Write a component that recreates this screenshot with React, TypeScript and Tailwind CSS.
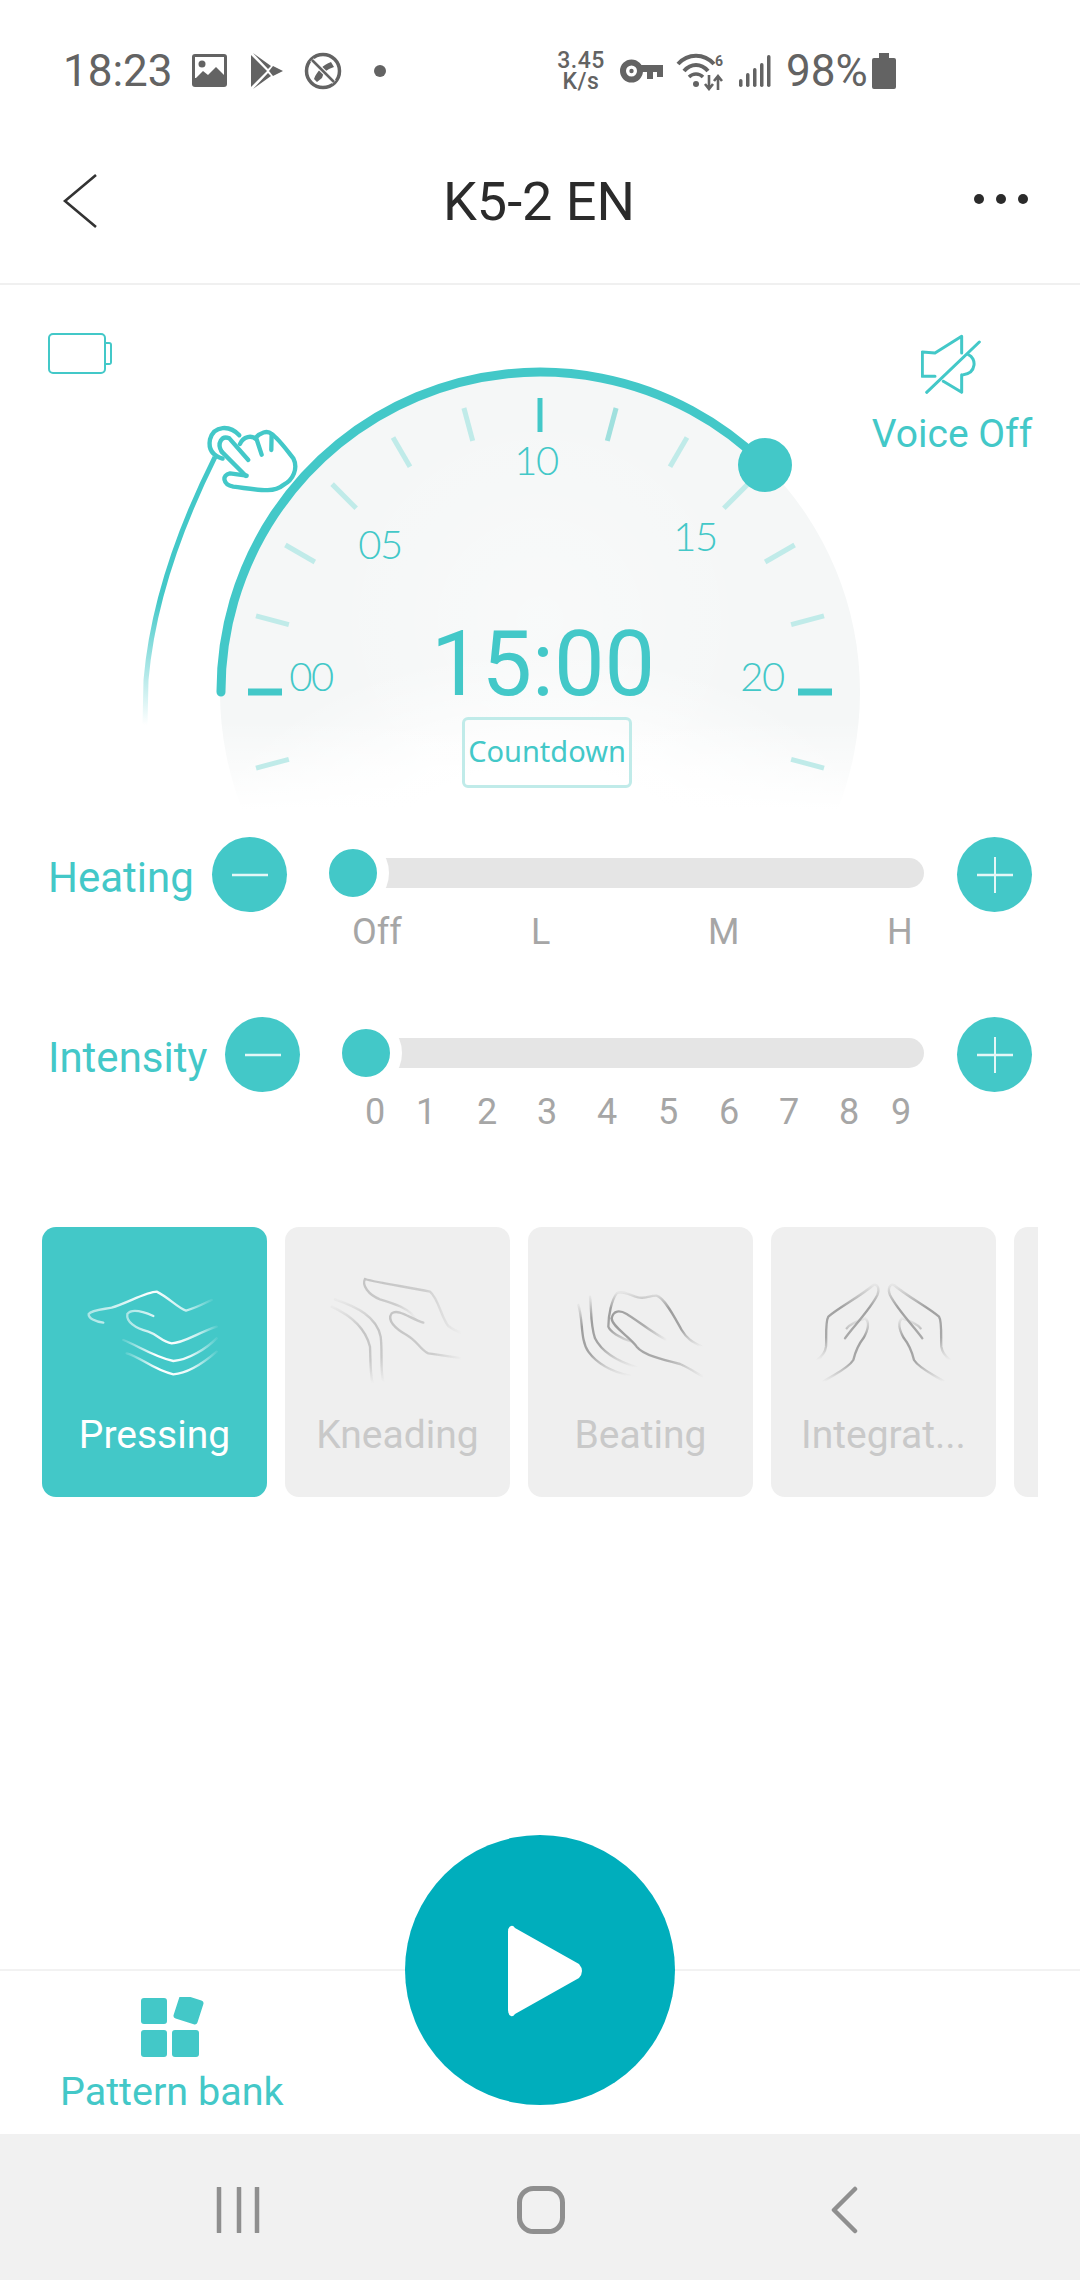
import React from "react";

const TEAL = "#43c8c8";

function StatusBar() {
  return (
    <div className="h-[120px] pt-[51px] flex text-[#636363] font-['Roboto',sans-serif]">
      <div className="h-[40px] flex items-center pl-[63px]">
        <span className="text-[44px] leading-[40px] w-[129px] whitespace-nowrap">18:23</span>
        <svg width="35" height="35" viewBox="0 0 35 35" className="shrink-0">
          <rect width="35" height="33" y="0" rx="3" fill="#636363" />
          <rect x="3" y="3" width="29" height="21" fill="#fff" />
          <circle cx="10" cy="10" r="3.5" fill="#636363" />
          <path d="M3 25 L11 17 L16 21 L24 13 L32 21 V27 H3Z" fill="#636363" />
        </svg>
        <svg width="32" height="36" viewBox="0 0 32 36" className="ml-[24px] shrink-0">
          <path d="M0 2 L16 18 L0 34Z" fill="#636363" />
          <path d="M2 0 L20 13 L17 16Z M2 36 L20 23 L17 20Z" fill="#636363" />
          <path d="M22 13 L32 18 L22 23 L18 18Z" fill="#636363" />
        </svg>
        <svg width="38" height="38" viewBox="0 0 38 38" className="ml-[21px] shrink-0">
          <circle cx="19" cy="19" r="16.5" fill="none" stroke="#636363" strokeWidth="3.5" />
          <path d="M10 27 C13 19 19 13 27 10 L30 15 L25 17 C21 19 19 22 18 26 L13 30Z" fill="#636363" />
          <path d="M8 8 L30 30" stroke="#fff" strokeWidth="5" />
          <path d="M8 8 L30 30" stroke="#636363" strokeWidth="2.5" />
        </svg>
        <span className="ml-[32px] size-[12px] rounded-full bg-[#636363]" />
      </div>
      <div className="h-[40px] flex items-center ml-[170px]">
        <div className="flex flex-col items-center w-[50px] text-[23px] leading-[21px] font-medium tracking-[0.5px]">
          <span>3.45</span>
          <span>K/s</span>
        </div>
        <svg width="44" height="24" viewBox="0 0 44 24" className="ml-[14px] shrink-0">
          <circle cx="11.5" cy="12" r="8.5" fill="none" stroke="#636363" strokeWidth="6" />
          <circle cx="11.5" cy="12" r="2.2" fill="#636363" />
          <path d="M19 6 H43 V18 H37 V13 H33 V20 H27 V13 H19Z" fill="#636363" />
        </svg>
        <svg width="50" height="40" viewBox="0 0 50 40" className="ml-[12px] shrink-0">
          <path d="M2 13 C12 2 28 2 38 13" fill="none" stroke="#636363" strokeWidth="4" />
          <path d="M8 20 C15 12 25 12 32 20" fill="none" stroke="#636363" strokeWidth="4" />
          <path d="M13 26 C17 22 23 22 27 26" fill="none" stroke="#636363" strokeWidth="3.5" />
          <circle cx="20" cy="33" r="3" fill="#636363" />
          <path d="M33 24 V37 M29 33 L33 38 L37 33" fill="none" stroke="#636363" strokeWidth="2.6" />
          <path d="M42 39 V26 M38 30 L42 25 L46 30" fill="none" stroke="#636363" strokeWidth="2.6" />
          <text x="39" y="15" fontSize="14" fontWeight="700" fill="#636363" fontFamily="Roboto">6</text>
        </svg>
        <svg width="32" height="32" viewBox="0 0 32 32" className="ml-[13px] shrink-0">
          <rect x="0" y="24" width="3.5" height="8" rx="1.7" fill="#636363" />
          <rect x="7" y="18" width="3.5" height="14" rx="1.7" fill="#636363" />
          <rect x="14" y="13" width="3.5" height="19" rx="1.7" fill="#636363" />
          <rect x="21" y="8" width="3.5" height="24" rx="1.7" fill="#636363" />
          <rect x="28" y="0" width="3.5" height="32" rx="1.7" fill="#636363" />
        </svg>
        <span className="ml-[15px] text-[44px] leading-[40px] w-[86px] whitespace-nowrap">98%</span>
        <svg width="24" height="36" viewBox="0 0 24 36" className="shrink-0">
          <path d="M7 0 H17 V5 H22 Q24 5 24 7 V34 Q24 36 22 36 H2 Q0 36 0 34 V7 Q0 5 2 5 H7Z" fill="#636363" />
        </svg>
      </div>
    </div>
  );
}

function NavBar() {
  return (
    <div className="h-[165px] border-b-2 border-[#f0f0f0] flex items-center justify-between pl-[62px] pr-[52px] relative font-['Roboto',sans-serif]">
      <svg width="36" height="56" viewBox="0 0 36 56" className="mt-[-1px]">
        <path d="M34 2 L3 28 L34 54" fill="none" stroke="#333" strokeWidth="2.6" />
      </svg>
      <span className="text-[54px] leading-[60px] text-[#2b2b2b] ml-[6px]">K5-2 EN</span>
      <div className="flex gap-[12px] mt-[-6px]">
        <span className="size-[10px] rounded-full bg-[#2b2b2b]" />
        <span className="size-[10px] rounded-full bg-[#2b2b2b]" />
        <span className="size-[10px] rounded-full bg-[#2b2b2b]" />
      </div>
    </div>
  );
}

function Tick({ deg }: { deg: number }) {
  const major = deg === 0 || deg === 180;
  const center = deg === 90;
  const rad = (deg * Math.PI) / 180;
  const r1 = major ? 258 : 260;
  const r2 = major ? 292 : 294;
  const c = Math.cos(rad);
  const s = Math.sin(rad);
  const color = major || center ? TEAL : deg === 75 ? "#a0e0de" : "#c0ebe9";
  return (
    <line
      x1={540 + r1 * c}
      y1={692 - r1 * s}
      x2={540 + r2 * c}
      y2={692 - r2 * s}
      stroke={color}
      strokeWidth={major ? 7 : 5}
    />
  );
}

const DIAL_NUMS: { t: string; cls: string }[] = [
  { t: "00", cls: "left-[287px] top-[367px]" },
  { t: "05", cls: "left-[356px] top-[235px]" },
  { t: "10", cls: "left-[512px] top-[151px]" },
  { t: "15", cls: "left-[671px] top-[227px]" },
  { t: "20", cls: "left-[738px] top-[367px]" },
];

function Dial() {
  const ticks = [-15, 0, 15, 30, 45, 60, 75, 90, 105, 120, 135, 150, 165, 180, 195];
  return (
    <div className="relative h-[545px] font-['Roboto',sans-serif]">
      <svg width="1080" height="545" viewBox="0 285 1080 545" className="absolute inset-0">
        <defs>
          <radialGradient id="whiteCore" gradientUnits="userSpaceOnUse" cx="540" cy="860" r="340" gradientTransform="translate(540 860) scale(1 0.62) translate(-540 -860)">
            <stop offset="0.45" stopColor="#fff" stopOpacity="1" />
            <stop offset="1" stopColor="#fff" stopOpacity="0" />
          </radialGradient>
          <radialGradient id="innerGlow" gradientUnits="userSpaceOnUse" cx="540" cy="620" r="220">
            <stop offset="0" stopColor="#fff" stopOpacity="0.35" />
            <stop offset="1" stopColor="#fff" stopOpacity="0" />
          </radialGradient>
          <linearGradient id="bottomFade" x1="0" y1="720" x2="0" y2="810" gradientUnits="userSpaceOnUse">
            <stop offset="0" stopColor="#fff" stopOpacity="0" />
            <stop offset="1" stopColor="#fff" stopOpacity="1" />
          </linearGradient>
          <linearGradient id="sideLine" x1="0" y1="600" x2="0" y2="725" gradientUnits="userSpaceOnUse">
            <stop offset="0" stopColor={TEAL} stopOpacity="1" />
            <stop offset="1" stopColor={TEAL} stopOpacity="0" />
          </linearGradient>
        </defs>
        <circle cx="540" cy="692" r="320" fill="#f5f7f7" />
        <rect x="300" y="400" width="480" height="440" fill="url(#innerGlow)" />
        <rect x="200" y="480" width="680" height="350" fill="url(#whiteCore)" />
        <rect x="200" y="720" width="680" height="110" fill="url(#bottomFade)" />
        {ticks.map((d) => (
          <Tick key={d} deg={d} />
        ))}
        <path d="M221 692 A319 319 0 0 1 765 465" fill="none" stroke={TEAL} strokeWidth="9" strokeLinecap="round" />
        <circle cx="765" cy="465" r="27" fill={TEAL} />
        <path d="M215 457 C176 535 152 610 146 680 L145 725" fill="none" stroke="url(#sideLine)" strokeWidth="5" />
        <g transform="translate(30 310) scale(0.3333)" fill="none" stroke={TEAL} strokeWidth="13" strokeLinecap="round" strokeLinejoin="round">
          <path d="M628 376 C600 345 552 345 540 388 C534 420 552 438 578 446" />
          <path d="M575 425 C560 400 575 375 598 385 L655 450" />
          <path d="M575 425 L648 498" />
          <path d="M630 402 C640 378 665 375 680 388 L695 434" />
          <path d="M675 385 C690 368 712 360 725 372 L724 420" />
          <path d="M725 372 C745 385 770 420 790 445 C805 475 790 510 760 525 C730 550 690 540 610 530 C578 524 575 495 600 490 L650 497" />
        </g>
      </svg>

      {DIAL_NUMS.map((n) => (
        <span key={n.t} className={`absolute ${n.cls} w-[48px] text-center text-[40px] leading-[48px] tracking-[-1.5px] font-light font-['Lato',sans-serif] text-[#43c8c8]`}>
          {n.t}
        </span>
      ))}
      <span className="absolute left-[428px] top-[325px] w-[230px] text-center text-[90px] leading-[110px] text-[#43c8c8]">15:00</span>
      <span className="absolute left-[462px] top-[432px] w-[170px] h-[71px] pb-[3px] border-[3px] border-[#c0ebe9] rounded-[6px] flex items-center justify-center text-[29px] text-[#43c8c8] font-['Noto_Sans',sans-serif]">
        Countdown
      </span>

      <div className="relative flex justify-between items-start pl-[48px] pr-[48px] pt-[48px]">
        <div className="flex items-center">
          <span className="block w-[58px] h-[41px] border-2 border-[#43c8c8] rounded-[5px]" />
          <span className="block w-[6px] h-[23px] border-2 border-l-0 border-[#43c8c8] rounded-r-[3px]" />
        </div>
        <div className="flex flex-col items-center w-[160px]">
          <svg width="60" height="62" viewBox="183 65 180 186" className="ml-[-2px]">
            <path
              d="M305 125 V75 L225 125 L187 122 V195 H225 M325 130 C350 140 350 185 310 190 M250 210 L305 243 V190 M358 92 L200 243"
              fill="none"
              stroke="#43c8c8"
              strokeWidth="9"
              strokeLinecap="round"
              strokeLinejoin="round"
            />
          </svg>
          <span className="text-[39px] leading-[48px] mt-[15px] text-[#43c8c8] whitespace-nowrap">Voice Off</span>
        </div>
      </div>
    </div>
  );
}

function RoundBtn({ plus }: { plus?: boolean }) {
  return (
    <span className="relative size-[75px] rounded-full bg-[#43c8c8] shrink-0 flex items-center justify-center">
      <svg width="38" height="38" viewBox="0 0 38 38">
        <path d="M1 19 H37" stroke="#e4f7f7" strokeWidth="2.5" />
        {plus && <path d="M19 1 V37" stroke="#e4f7f7" strokeWidth="2" />}
      </svg>
    </span>
  );
}

function SliderRow({
  label,
  labelW,
  children,
}: {
  label: string;
  labelW: string;
  children: React.ReactNode;
}) {
  return (
    <div className="flex items-start pl-[48px] pr-[48px]">
      <span className={`${labelW} h-[75px] pt-[5px] flex items-center text-[42px] text-[#43c8c8] shrink-0`}>{label}</span>
      <RoundBtn />
      <div className="flex-1 ml-[30px] mr-[33px] min-w-0">
        <div className="relative h-[72px] flex items-center">
          <div className="ml-[36px] flex-1 h-[30px] rounded-r-full bg-[#e5e5e5]" />
          <span className="absolute left-0 top-0 size-[72px] rounded-full border-[12px] border-white bg-[#43c8c8]" />
        </div>
        {children}
      </div>
      <RoundBtn plus />
    </div>
  );
}

function PressingIcon() {
  return (
    <svg width="225" height="186" viewBox="6 -39 675 558" className="block blur-[0.5px]">
      <defs>
        <linearGradient id="pFade" x1="0" x2="1" y1="0" y2="0">
          <stop offset="0" stopColor="#fff" stopOpacity="0.15" />
          <stop offset="0.35" stopColor="#fff" stopOpacity="1" />
          <stop offset="0.7" stopColor="#fff" stopOpacity="0.9" />
          <stop offset="1" stopColor="#fff" stopOpacity="0.1" />
        </linearGradient>
        <linearGradient id="pTop" x1="0" x2="1" y1="0" y2="0">
          <stop offset="0" stopColor="#fff" stopOpacity="0.55" />
          <stop offset="0.5" stopColor="#fff" stopOpacity="1" />
          <stop offset="0.8" stopColor="#fff" stopOpacity="0.7" />
          <stop offset="1" stopColor="#fff" stopOpacity="0.1" />
        </linearGradient>
      </defs>
      <g fill="none" strokeWidth="7" strokeLinecap="round">
        <path stroke="url(#pTop)" d="M515 180 C490 192 460 207 438 212 C415 205 385 172 350 155 C320 155 260 190 215 203 C190 208 155 210 146 222 C145 235 165 245 190 248" />
        <path stroke="url(#pTop)" d="M340 228 C310 215 275 205 262 222 C258 245 285 265 325 275 C355 285 365 305 395 310 C430 310 470 280 530 260" />
        <path stroke="url(#pFade)" d="M250 300 C290 315 340 350 400 363 C445 360 500 325 530 295" />
        <path stroke="url(#pFade)" d="M260 340 C300 350 340 390 400 403 C445 400 495 365 530 335" />
      </g>
    </svg>
  );
}

function GradDefs({ id, color }: { id: string; color: string }) {
  return (
    <defs>
      <linearGradient id={`${id}V`} x1="0" x2="0" y1="0" y2="1">
        <stop offset="0" stopColor={color} stopOpacity="0.1" />
        <stop offset="0.3" stopColor={color} stopOpacity="1" />
        <stop offset="0.7" stopColor={color} stopOpacity="0.9" />
        <stop offset="1" stopColor={color} stopOpacity="0" />
      </linearGradient>
      <linearGradient id={`${id}H`} x1="0" x2="1" y1="0" y2="0">
        <stop offset="0" stopColor={color} stopOpacity="1" />
        <stop offset="0.6" stopColor={color} stopOpacity="0.8" />
        <stop offset="1" stopColor={color} stopOpacity="0" />
      </linearGradient>
    </defs>
  );
}

function KneadingIcon() {
  return (
    <svg width="225" height="186" viewBox="735 -39 675 558" className="block blur-[0.5px]">
      <GradDefs id="kn" color="#c4c4c4" />
      <g fill="none" strokeWidth="7" strokeLinecap="round">
        <path stroke="url(#knH)" d="M975 117 C965 135 985 165 1020 178 C1060 190 1110 205 1130 240" />
        <path stroke="url(#knH)" d="M975 117 C1020 130 1100 140 1170 155 C1195 175 1205 235 1225 258 C1240 270 1255 275 1265 280" />
        <path stroke="url(#knH)" d="M1150 248 C1110 235 1075 205 1055 220 C1040 240 1065 265 1100 285 C1135 305 1140 330 1165 340 C1200 345 1240 350 1265 355" />
        <path stroke="url(#knV)" d="M885 178 C950 200 1010 230 1022 290 C1028 340 1020 390 1030 425" />
        <path stroke="url(#knV)" d="M875 200 C930 225 975 260 990 320 C992 360 990 400 998 430" />
      </g>
    </svg>
  );
}

function BeatingIcon() {
  return (
    <svg width="225" height="186" viewBox="-36 -39 675 558" className="block blur-[0.5px]">
      <GradDefs id="be" color="#9c9c9c" />
      <g fill="none" strokeWidth="7" strokeLinecap="round">
        <path stroke="url(#beV)" d="M485 320 C455 305 440 295 425 270 C405 235 375 175 350 167 C330 165 320 178 295 172 C270 165 245 150 230 160 C215 180 205 225 205 260 C210 275 240 295 275 305" />
        <path stroke="url(#beH)" d="M215 235 C220 210 240 210 260 222 C290 240 340 280 380 300" />
        <path stroke="url(#beH)" d="M215 235 C215 260 270 290 290 320 C310 345 370 360 420 372 C450 385 470 400 490 410" />
        <path stroke="url(#beV)" d="M150 170 C155 205 150 250 165 295 C185 335 235 365 290 382" />
        <path stroke="url(#beV)" d="M115 195 C130 240 120 300 145 335 C170 370 215 395 270 408" />
      </g>
    </svg>
  );
}

function IntegrateIcon() {
  const hand = (
    <g fill="none" strokeWidth="7" strokeLinecap="round">
      <path stroke="url(#inV)" d="M915 295 C935 265 990 210 1012 165 C1020 145 1012 130 1000 135 C960 170 900 200 865 230 C855 245 860 300 858 320 C855 340 845 350 832 360" />
      <path stroke="url(#inV)" d="M920 265 C930 250 960 240 975 235 C990 245 985 270 970 295 C950 320 945 340 940 360 C925 385 880 405 850 425" />
    </g>
  );
  return (
    <svg width="225" height="186" viewBox="693 -39 675 558" className="block blur-[0.5px]">
      <GradDefs id="in" color="#a0a0a0" />
      {hand}
      <g transform="translate(2062 0) scale(-1 1)">{hand}</g>
    </svg>
  );
}

function Card({ label, active, icon }: { label: string; active?: boolean; icon?: React.ReactNode }) {
  return (
    <div className={`w-[225px] h-[270px] shrink-0 rounded-[14px] ${active ? "bg-[#43c8c8]" : "bg-[#efefef]"}`}>
      {icon}
      <div className={`text-center text-[39px] leading-[44px] whitespace-nowrap ${active ? "text-white" : "text-[#c9c9c9]"}`}>{label}</div>
    </div>
  );
}

export default function App() {
  return (
    <div className="w-[1080px] h-[2280px] bg-white flex flex-col overflow-hidden font-['Roboto',sans-serif]">
      <StatusBar />
      <NavBar />
      <Dial />

      <div className="mt-[7px]">
        <SliderRow label="Heating" labelW="w-[164px]">
          <div className="pl-[35px] pt-[2px] grid grid-cols-[179px_177px_179px_auto] h-[42px] leading-[42px] text-[36px] text-[#a6a6a6]">
            <span>Off</span>
            <span>L</span>
            <span>M</span>
            <span>H</span>
          </div>
        </SliderRow>
      </div>

      <div className="mt-[66px]">
        <SliderRow label="Intensity" labelW="w-[177px]">
          <div className="pl-[35px] pt-[2px] grid grid-cols-[51px_61px_60px_60px_61px_61px_60px_60px_52px_auto] h-[42px] leading-[42px] text-[36px] text-[#a6a6a6]">
            {["0", "1", "2", "3", "4", "5", "6", "7", "8", "9"].map((d) => (
              <span key={d}>{d}</span>
            ))}
          </div>
        </SliderRow>
      </div>

      <div className="mt-[96px] ml-[42px] w-[996px] overflow-hidden flex gap-[18px]">
        <Card label="Pressing" active icon={<PressingIcon />} />
        <Card label="Kneading" icon={<KneadingIcon />} />
        <Card label="Beating" icon={<BeatingIcon />} />
        <Card label="Integrat..." icon={<IntegrateIcon />} />
        <Card label="" />
      </div>

      <div className="mt-auto relative h-[165px] border-t-2 border-[#f2f2f2]">
        <div className="flex flex-col items-center w-fit ml-[60px] pt-[26px]">
          <svg width="64" height="60" viewBox="0 0 64 60" className="ml-[2px]">
            <rect x="0" y="1" width="26" height="26" rx="3" fill="#43c8c8" />
            <rect x="0" y="33" width="26" height="27" rx="3" fill="#43c8c8" />
            <rect x="31" y="33" width="27" height="27" rx="3" fill="#43c8c8" />
            <rect x="35" y="0" width="25" height="25" rx="3" fill="#43c8c8" transform="rotate(18 47.5 12.5)" />
          </svg>
          <span className="text-[39.5px] leading-[44px] mt-[13px] text-[#43c8c8] whitespace-nowrap">Pattern bank</span>
        </div>
        <div className="absolute left-[405px] top-[-136px] size-[270px] rounded-full bg-[#00aebc] flex items-center justify-center">
          <svg width="80" height="94" viewBox="0 0 80 94" className="ml-[9px] mt-[2px]">
            <path d="M3 8 Q3 3 6 2 Q8 1 10 4 L74 40 Q80 47 74 54 L10 90 Q8 93 6 92 Q3 91 3 86Z" fill="#fff" />
          </svg>
        </div>
      </div>

      <div className="h-[146px] bg-[#f1f1f1] flex items-center pl-[216px] pt-[6px]">
        <svg width="44" height="46" viewBox="0 0 44 46">
          <path d="M3 1 V45 M23 1 V45 M41 1 V45" stroke="#8f8f8f" strokeWidth="4.5" strokeLinecap="round" />
        </svg>
        <svg width="50" height="50" viewBox="0 0 50 50" className="ml-[256px]">
          <rect x="3.5" y="3.5" width="43" height="43" rx="14" fill="none" stroke="#8f8f8f" strokeWidth="5" />
        </svg>
        <svg width="28" height="48" viewBox="0 0 28 48" className="ml-[264px]">
          <path d="M25 3 L4 24 L25 45" fill="none" stroke="#8f8f8f" strokeWidth="4.5" strokeLinecap="round" strokeLinejoin="round" />
        </svg>
      </div>
    </div>
  );
}
